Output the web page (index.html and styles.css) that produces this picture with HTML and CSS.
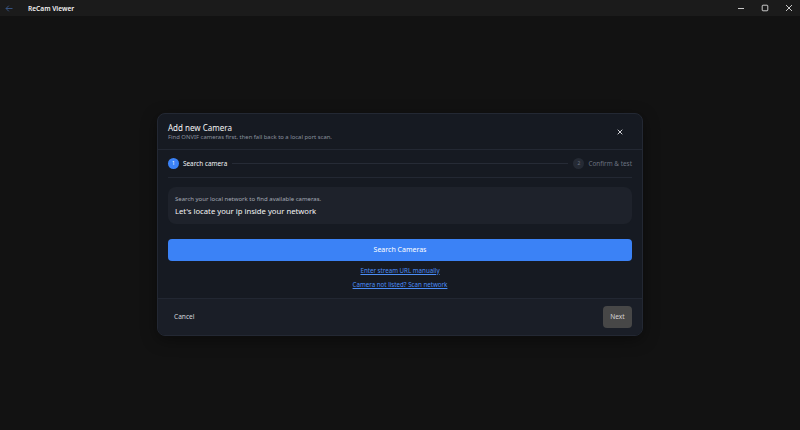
FILE: index.html
```html
<!DOCTYPE html>
<html lang="en">
<head>
  <meta charset="UTF-8" />
  <title>ReCam Viewer</title>
  <link rel="stylesheet" href="styles.css">
</head>
<body>

<div class="titlebar">
  <svg class="back" width="8" height="7" viewBox="0 0 8 7"><path d="M7.5 3.5H1M3.8 0.7L1 3.5l2.8 2.8" fill="none" stroke="#3b5a8c" stroke-width="0.9"/></svg>
  <span class="app-name">ReCam Viewer</span>
  <div class="win-controls">
    <svg width="8" height="8" viewBox="0 0 8 8"><path d="M1 4.5h6" stroke="#ddd" stroke-width="0.9"/></svg>
    <svg width="8" height="8" viewBox="0 0 8 8"><rect x="1.2" y="1.2" width="5.6" height="5.6" rx="0.8" fill="none" stroke="#ddd" stroke-width="0.9"/></svg>
    <svg width="8" height="8" viewBox="0 0 8 8"><path d="M1 1l6 6M7 1L1 7" stroke="#ddd" stroke-width="0.9"/></svg>
  </div>
</div>

<main class="main">
  <div class="dialog">
    <div class="dialog-header">
      <div>
        <div class="dialog-title">Add new Camera</div>
        <div class="dialog-sub">Find ONVIF cameras first, then fall back to a local port scan.</div>
      </div>
      <svg class="close" width="6" height="6" viewBox="0 0 6 6"><path d="M0.7 0.7l4.6 4.6M5.3 0.7L0.7 5.3" stroke="#e5e7eb" stroke-width="0.9"/></svg>
    </div>

    <div class="dialog-body">
      <div class="stepper">
        <span class="step-num active">1</span>
        <span class="step-label active">Search camera</span>
        <span class="step-line"></span>
        <span class="step-num">2</span>
        <span class="step-label">Confirm &amp; test</span>
      </div>

      <div class="info-card">
        <div class="info-hint">Search your local network to find available cameras.</div>
        <div class="info-main">Let's locate your ip inside your network</div>
      </div>

      <button class="btn-primary">Search Cameras</button>

      <div class="links">
        <a href="#">Enter stream URL manually</a>
        <a href="#">Camera not listed? Scan network</a>
      </div>
    </div>

    <div class="dialog-footer">
      <button class="btn-text">Cancel</button>
      <button class="btn-next">Next</button>
    </div>
  </div>
</main>

</body>
</html>
```

FILE: styles.css
```css
html, body {
  height: 100%;
}
body {
  margin: 0;
  font-family: "Noto Sans", "Open Sans", sans-serif;
  background-color: #121212;
  color: #e5e7eb;
  display: flex;
  flex-direction: column;
}
.titlebar {
  height: 16px;
  background-color: #1b1b1b;
  display: flex;
  align-items: center;
  flex-shrink: 0;
}
.back {
  margin-left: 5px;
}
.app-name {
  margin-left: 15px;
  font-size: 6.6px;
  font-weight: 600;
  color: #f3f3f3;
}
.win-controls {
  margin-left: auto;
  display: flex;
  gap: 16px;
  margin-right: 7px;
}
.main {
  flex: 1;
  display: flex;
  align-items: center;
  justify-content: center;
  padding-top: 2px;
}
.dialog {
  width: 484px;
  background-color: #161a22;
  border: 1px solid #232833;
  border-radius: 8px;
  overflow: hidden;
  box-shadow: 0 4px 16px rgba(0,0,0,0.4);
}
.dialog-header {
  display: flex;
  justify-content: space-between;
  align-items: center;
  padding: 8px 19px 7px 10px;
  border-bottom: 1px solid #232833;
}
.dialog-title {
  font-size: 8px;
  line-height: 11px;
  color: #f5f5f5;
}
.dialog-sub {
  font-size: 5.9px;
  line-height: 9px;
  color: #8a919e;
}
.dialog-body {
  padding: 0 10px 8px;
}
.stepper {
  display: flex;
  align-items: center;
  height: 27px;
  border-bottom: 1px solid #232833;
}
.step-num {
  width: 11px;
  height: 11px;
  border-radius: 50%;
  background-color: #252a34;
  color: #6b7280;
  font-size: 5px;
  display: flex;
  align-items: center;
  justify-content: center;
}
.step-num.active {
  background-color: #3b82f6;
  color: #fff;
}
.step-label {
  margin-left: 4px;
  font-size: 6.4px;
  color: #6b7280;
}
.step-label.active {
  color: #f3f4f6;
}
.step-line {
  flex: 1;
  height: 1px;
  background-color: #262b36;
  margin: 0 5px;
}
.info-card {
  margin-top: 9px;
  background-color: #1e222b;
  border-radius: 8px;
  padding: 7px 7px 6px;
}
.info-hint {
  font-size: 6px;
  line-height: 10px;
  color: #a3a9b4;
}
.info-main {
  font-size: 7.7px;
  line-height: 14px;
  color: #f5f5f5;
}
.btn-primary {
  display: block;
  width: 100%;
  margin-top: 15px;
  height: 22px;
  border: none;
  border-radius: 4px;
  background-color: #3b82f6;
  color: #fff;
  font-family: inherit;
  font-size: 7px;
}
.links {
  display: flex;
  flex-direction: column;
  align-items: center;
  gap: 4px;
  margin-top: 5px;
}
.links a {
  font-size: 6.2px;
  line-height: 10px;
  color: #4b8df5;
}
.dialog-footer {
  display: flex;
  justify-content: space-between;
  align-items: center;
  padding: 7px 10px;
  background-color: #1a1e27;
  border-top: 1px solid #222732;
}
.btn-text {
  background: none;
  border: none;
  color: #d1d5db;
  font-family: inherit;
  font-size: 6.6px;
  padding: 0 6px;
}
.btn-next {
  width: 29px;
  height: 22px;
  border: none;
  border-radius: 4px;
  background-color: #474747;
  color: #d4d4d4;
  font-family: inherit;
  font-size: 6.6px;
  padding: 0;
}
```
